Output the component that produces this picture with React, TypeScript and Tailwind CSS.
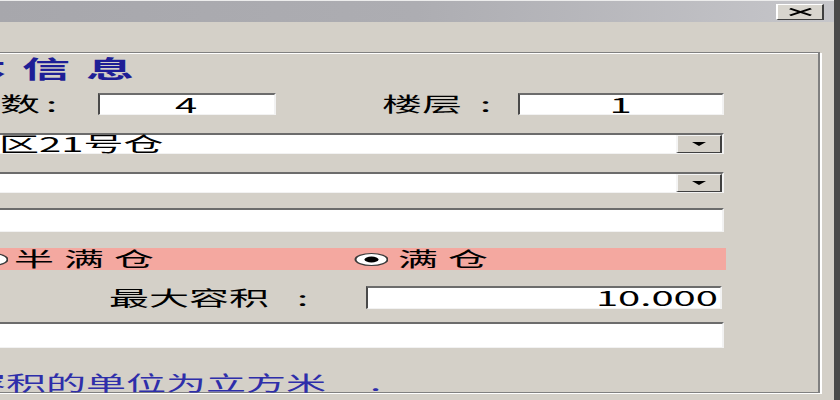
const sunken =
  'bg-white border-t-2 border-l-[1.5px] border-r border-b border-t-[#6c6c6c] border-l-[#4a4a4a] border-r-[#f2f2f2] border-b-[#f2f2f2]'

function Radio({ checked }: { checked?: boolean }) {
  return (
    <svg width="17.5" height="13" viewBox="0 0 17.5 13" className="shrink-0">
      <ellipse cx="8.75" cy="6.5" rx="8" ry="6" fill="#fff" stroke="#3a3a3a" strokeWidth="1" />
      {checked && <ellipse cx="8.75" cy="6.5" rx="3.5" ry="3" fill="#000" />}
    </svg>
  )
}

function Combo({ text }: { text?: string }) {
  return (
    <div className={`-ml-[30px] flex h-[21px] w-[391.5px] items-center ${sunken}`}>
      <span className="flex-1 pl-[8.5px] leading-[18px]">{text}</span>
      <span className="flex h-full w-[23px] items-center justify-center border-t border-l border-r-[1.5px] border-b-[1.5px] border-t-[#f4f4f4] border-l-[#f4f4f4] border-r-[#404040] border-b-[#404040] bg-[#d4d0c8]">
        <svg width="7" height="4" viewBox="0 0 7 4">
          <path d="M0 0h7L3.5 4z" fill="#000" />
        </svg>
      </span>
    </div>
  )
}

export default function App() {
  return (
    <div className="flex h-[400px] w-[420px] origin-left scale-x-[2] flex-col overflow-hidden border-r-[3px] border-r-[#4a4a4a] bg-[#d4d0c8] font-['Noto_Sans_CJK_SC',sans-serif] text-[20px] text-black">
      {/* title bar */}
      <div className="flex h-[22px] shrink-0 items-center justify-end border-t border-t-[#ececec] bg-linear-to-r from-[#a7a7ac] via-[#adadb2] to-[#c6c6ca] pr-[5px]">
        <div className="flex h-[16px] w-[24px] items-center justify-center border-t border-l border-r-[1.5px] border-b-[1.5px] border-t-white border-l-white border-r-[#404040] border-b-[#404040] bg-[#d8d5ce]">
          <svg width="12.5" height="8" viewBox="0 0 12.5 8">
            <path d="M1 0.6L11.5 7.4M1 7.4L11.5 0.6" stroke="#000" strokeWidth="1.7" />
          </svg>
        </div>
      </div>

      <div className="flex-1">
        {/* group box */}
        <div className="mt-[30px] -ml-[60px] h-[341px] w-[470px] border border-[#808080] shadow-[1px_1px_0_#fff,inset_1px_1px_0_#fff]">
          <div className="ml-[59px] flex flex-col items-start">
            <div className="mt-[1px] -ml-[53px] h-[28px] text-[24px] leading-[28px] font-bold tracking-[8px] whitespace-nowrap text-[#1e1e96]">
              基本信息
            </div>

            <div className="mt-[11px] flex h-[22px] items-center">
              <div className="-ml-[20px] w-[68.5px] leading-[22px] whitespace-nowrap">
                层数<span className="ml-[3px]">:</span>
              </div>
              <div className={`flex h-full w-[89px] items-center justify-center leading-[19px] ${sunken}`}>4</div>
              <div className="ml-[53.5px] w-[68px] leading-[22px] whitespace-nowrap">
                楼层<span className="ml-[9px]">:</span>
              </div>
              <div className={`flex h-full w-[102.5px] items-center justify-center leading-[19px] ${sunken}`}>1</div>
            </div>

            <div className="mt-[18px]">
              <Combo text="一区21号仓" />
            </div>
            <div className="mt-[18px]">
              <Combo />
            </div>

            <div className={`mt-[15px] -ml-[30px] h-[24px] w-[391.5px] ${sunken}`} />

            <div className="mt-[16px] -ml-[30px] flex h-[22px] w-[392.5px] items-center bg-[#f4a8a0]">
              <div className="ml-[16.5px] flex w-[190px] items-center">
                <Radio />
                <span className="ml-[3px] leading-[22px] tracking-[5px] whitespace-nowrap">半满仓</span>
              </div>
              <div className="flex items-center">
                <Radio checked />
                <span className="ml-[5px] leading-[22px] tracking-[5px] whitespace-nowrap">满仓</span>
              </div>
            </div>

            <div className="mt-[16px] flex h-[23px] items-center">
              <div className="ml-[54.5px] w-[128px] leading-[23px] whitespace-nowrap">
                最大容积<span className="ml-[14px]">:</span>
              </div>
              <div className={`flex h-full w-[178.5px] items-center justify-end pr-[1px] leading-[20px] ${sunken}`}>
                10.000
              </div>
            </div>

            <div className={`mt-[13px] -ml-[30px] h-[26px] w-[391.5px] ${sunken}`} />

            <div className="mt-[24px] -ml-[57px] h-[22px] leading-[22px] whitespace-nowrap text-[#2e2eaa]">
              注：容积的单位为立方米<span className="ml-[22px]">.</span>
            </div>
          </div>
        </div>
      </div>
    </div>
  )
}
